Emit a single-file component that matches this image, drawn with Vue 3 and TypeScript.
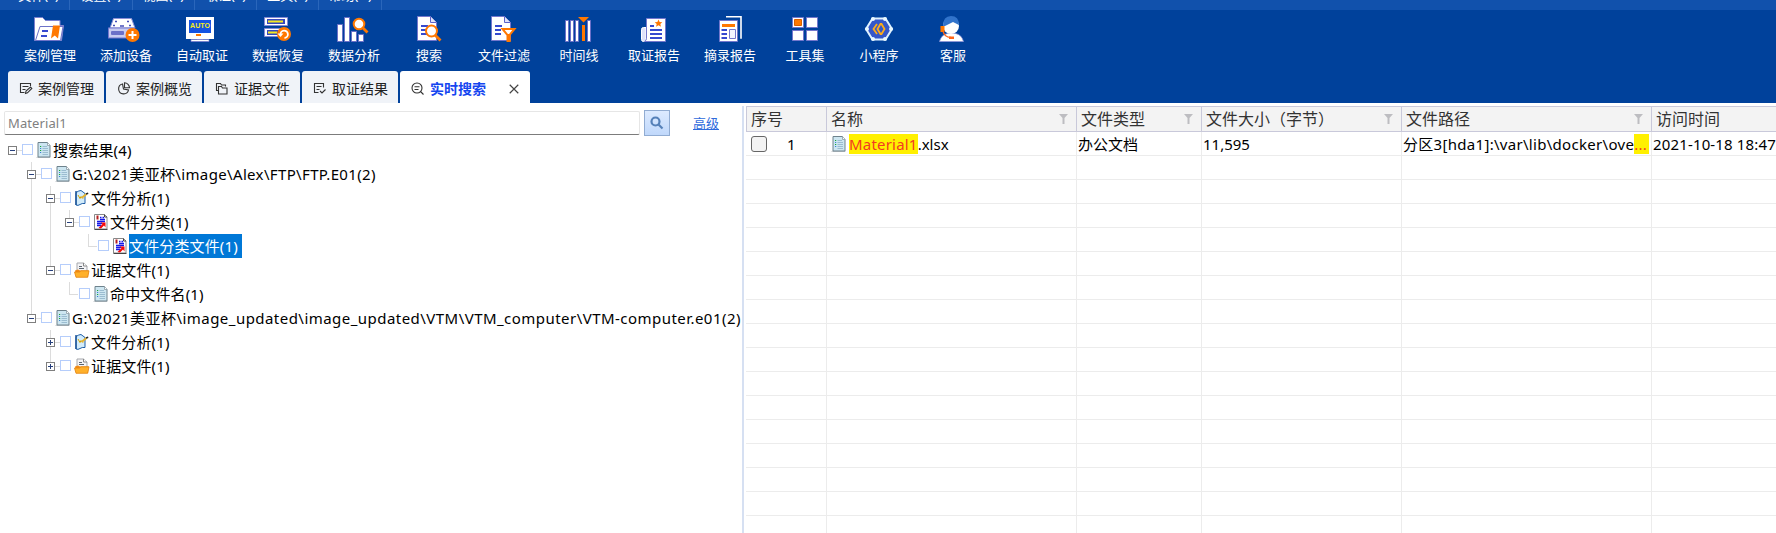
<script setup lang="ts">
interface Tool { label: string; art: string }
interface Tab { label: string; art: string; active?: boolean }
type Guide = '' | 'full' | 'half'
interface Node {
  label: string
  level: number
  toggle?: 'minus' | 'plus'
  icon: 'doc' | 'analysis' | 'category' | 'folder'
  guides: Guide[]
  selected?: boolean
  source?: 'short' | 'long'
}
interface Column { title: string; width: number; filter: boolean }

const menus: string[] = ['文件(F)', '设置(S)', '视图(V)', '取证(E)', '工具(T)', '帮助(H)']

const page = '<path d="M.5.5h13l6 6v18H.5z" fill="#fff" stroke="#7377cd"/><path d="M13.5.5v6h6" fill="#dfe3fa" stroke="#5b62c8"/><path d="M4 10h7M4 14h6M4 18h6" stroke="#3549cf" stroke-width="1.8"/>'

const tools: Tool[] = [
  { label: '案例管理', art: '<path d="M.5 1.500h8l3 3h14.500v5h3.500l-2 15H.5z" fill="#fff" stroke="#7b80cf"/><path d="M6 10.500h23l-2.500 14H1.500z" fill="#fff" stroke="#6d72c8"/><path d="M8 15h6M7 20h6" stroke="#3549cf" stroke-width="1.8"/><path d="M19 9.500h7l-2 13-3.200-3-3.800 3z" fill="#ff7800"/>' },
  { label: '添加设备', art: '<path d="M3.500 2.500h18l3.500 9.500H0z" fill="#fff" stroke="#8a8fd6"/><rect x="-1.500" y="12" width="26" height="10" fill="#c9ccf0" stroke="#7377cd"/><rect x="1" y="15" width="13" height="4" rx="1" fill="#6b70c8"/><path d="M5 5.500h2M17 5.500h2M3 9.500h2M19 9.500h2M10 10h4" stroke="#444db8" stroke-width="1.600"/><circle cx="22.500" cy="19" r="7" fill="#ff7800"/><path d="M18.500 19h8M22.500 15v8" stroke="#fff" stroke-width="2"/>' },
  { label: '自动取证', art: '<path d="M0 1h28v22H0z" fill="#fff"/><path d="M3 4h22v13H3z" fill="#1453e2"/><text x="14" y="12" text-anchor="middle" textLength="20" lengthAdjust="spacingAndGlyphs" font-size="6.500" font-weight="bold" font-family="Liberation Sans, sans-serif" fill="#f5ee18">AUTO</text><path d="M10 18h5v2h-5z" fill="#ff7800"/><path d="M11 23h6v1h-6z" fill="#7377cd"/><path d="M5 23.500h18v2H5z" fill="#fff" stroke="#7377cd" stroke-width=".7"/>' },
  { label: '数据恢复', art: '<g fill="#fff" stroke="#8589d4"><path d="M2.500 1.500h23v8h-23zM2.500 12.500h23v8h-23z"/></g><path d="M5 3h18v5H5zM5 14h18v5H5z" fill="#3446bf"/><path d="M6 5.500h15M6 16.500h9" stroke="#f4ea20" stroke-width="2"/><circle cx="22" cy="18" r="7" fill="#ff7800"/><path d="M18.500 18.500a3.700 3.700 0 1 1 4 3.500" fill="none" stroke="#fff" stroke-width="1.800"/><path d="M15.500 17.500h6L18.500 21z" fill="#fff"/>' },
  { label: '数据分析', art: '<g fill="#fff" stroke="#6b70c8"><path d="M-.5 8.500h5v17h-5zM6.500 1.500h5v24h-5zM13.500 15.500h5v10h-5zM20.500 18.500h5v7h-5z"/></g><path d="M24.500 11.500l5 5" stroke="#ff7800" stroke-width="2.800"/><circle cx="21" cy="8" r="5.300" fill="#fff" stroke="#ff7800" stroke-width="2"/>' },
  { label: '搜索', art: `<g transform="translate(4 0)">${page}</g><path d="M22 19l5.500 5.500" stroke="#ff7800" stroke-width="2.800"/><circle cx="18.500" cy="15" r="5.500" fill="#fff" stroke="#ff7800" stroke-width="2"/>` },
  { label: '文件过滤', art: `<g transform="translate(3 0)">${page}</g><path d="M14.500 13h12l-5 6v6l-2 0v-6z" fill="#fff" stroke="#ff7800" stroke-width="2"/><path d="M19.500 18h3v8h-3z" fill="#ff7800"/>` },
  { label: '时间线', art: '<g fill="#fff" stroke="#6b70c8"><path d="M2.500 4.500h3v21h-3zM7.500 4.500h3v21h-3zM12.500 4.500h3v21h-3zM24.500 4.500h3v21h-3z"/></g><path d="M15 1h11l-5.500 5.500z" fill="#ff7800"/><path d="M19 9h3v16h-3z" fill="#ff7800"/>' },
  { label: '取证报告', art: '<path d="M8 11.500H5.500q-2 0-2 2v10q0 2 2 2H8z" fill="#dfe3fa" stroke="#fff"/><path d="M8.500 2.500h19v23h-21q2-1 2-3z" fill="#fff" stroke="#7377cd"/><path d="M20.500 3.500l1.100 2.500 2.700.2-2 1.800.7 2.700-2.500-1.500L18 10.700l.7-2.700-2-1.800 2.700-.2z" fill="#ff7800"/><path d="M12 10h4M12 14h12M12 18h12M12 22h12" stroke="#3549cf" stroke-width="1.800"/>' },
  { label: '摘录报告', art: '<path d="M12 .8h15v22" fill="none" stroke="#fff" stroke-width="1.600"/><path d="M5.500 4.500h18v21h-18z" fill="#fff" stroke="#7377cd"/><path d="M8 8h13v3H8z" fill="#ff7800"/><path d="M7.500 14h5.500M7.500 18h5.500M7.500 22h5.500" stroke="#3549cf" stroke-width="1.800"/><path d="M15.500 13.500h6v9h-6z" fill="#f4f5ff" stroke="#7377cd"/>' },
  { label: '工具集', art: '<g fill="#fff" stroke="#7377cd"><path d="M3.500 1.500h11v10h-11zM17.500 1.500h11v10h-11zM3.500 14.500h11v10h-11zM17.500 14.500h11v10h-11z"/></g><path d="M5.500 3.500h7v6h-7z" fill="#ff7800" stroke="#d95f00"/>' },
  { label: '小程序', art: '<path d="M9.500 2.500h13L29 13l-6.500 10.500h-13L3 13z" fill="#3557c9" stroke="#dff2ff" stroke-width="2"/><g fill="#e8f8ff"><circle cx="10" cy="3" r="2"/><circle cx="22" cy="3" r="2"/><circle cx="28" cy="13" r="2"/><circle cx="22" cy="23" r="2"/><circle cx="10" cy="23" r="2"/><circle cx="4" cy="13" r="2"/></g><path d="M14 8l-3.500 5 3.500 5M17.500 8h1l3 5-3 5h-1l-3-5z" fill="none" stroke="#ffac18" stroke-width="1.800"/>' },
  { label: '客服', art: '<path d="M2.500 25.500q2-7 8-8h8q6 1 8 8z" fill="#fff" stroke="#8f94da" stroke-width=".7"/><circle cx="14" cy="10" r="8" fill="#fff"/><path d="M6 10Q6 0 14 0t8 9l-6-3-8 4z" fill="#3173cb"/><path d="M3.500 10h4v6h-4z" fill="#ff7800"/><path d="M6 15q1 6 8 6.500" fill="none" stroke="#ff6418" stroke-width="1.400"/><path d="M12 20.500h5v2.500h-5z" fill="#ff6418"/>' },
]

const tabs: Tab[] = [
  { label: '案例管理', art: '<path d="M11.500 4V1.500H1.500v9h4M3.500 4.500h6M3.500 7.500h3"/><path d="M6.500 11.500l.5-2.500 4.500-4 1.300 1.500-4.300 4.300z"/>' },
  { label: '案例概览', art: '<path d="M5.500 2A5 5 0 1 0 11.500 8l-5-1z"/><path d="M7.500.8v5h5A5 5 0 0 0 7.500.8z"/>' },
  { label: '证据文件', art: '<path d="M3.500 8.500h-2v-7h4l1 1.500h4v1.500"/><path d="M3.500 4.500h3l1 1.500h4.500v6H3.500z"/>' },
  { label: '取证结果', art: '<path d="M10.500 5.500v-4h-9v9h4M3.500 4.500h5M3.500 7.500h3M7 9l2 2 3.500-3.500"/>' },
  { label: '实时搜索', art: '<circle cx="6" cy="6" r="5"/><path d="M9.500 9.500l3 3M3.500 4.800h5M3.500 7.500h4"/>', active: true },
]

const nodes: Node[] = [
  { label: '搜索结果(4)', level: 0, toggle: 'minus', icon: 'doc', guides: [''] },
  { label: 'G:\\2021美亚杯\\image\\Alex\\FTP\\FTP.E01(2)', level: 1, toggle: 'minus', icon: 'doc', guides: ['', 'full'], source: 'short' },
  { label: '文件分析(1)', level: 2, toggle: 'minus', icon: 'analysis', guides: ['', 'full', 'full'] },
  { label: '文件分类(1)', level: 3, toggle: 'minus', icon: 'category', guides: ['', 'full', 'full', 'half'] },
  { label: '文件分类文件(1)', level: 4, icon: 'category', guides: ['', 'full', 'full', '', 'half'], selected: true },
  { label: '证据文件(1)', level: 2, toggle: 'minus', icon: 'folder', guides: ['', 'full', 'half'] },
  { label: '命中文件名(1)', level: 3, icon: 'doc', guides: ['', 'full', '', 'half'] },
  { label: 'G:\\2021美亚杯\\image_updated\\image_updated\\VTM\\VTM_computer\\VTM-computer.e01(2)', level: 1, toggle: 'minus', icon: 'doc', guides: ['', 'half'], source: 'long' },
  { label: '文件分析(1)', level: 2, toggle: 'plus', icon: 'analysis', guides: ['', '', 'full'] },
  { label: '证据文件(1)', level: 2, toggle: 'plus', icon: 'folder', guides: ['', '', 'half'] },
]

const docArt = '<path d="M.5 15.500h14" stroke="#c9cdd0"/><path d="M2 .5h9.500l2.500 3v11.500H2z" fill="#cde6f1" stroke="#6e828c"/><path d="M11.500.5v3H14" fill="#fff" stroke="#8b9ba3" stroke-width=".8"/><path d="M6.500 4.500h4.500M6.500 6.500h5.500M6.500 8.500h5.500M6.500 10.500h5.500M6.500 12.500h5.500" stroke="#9bbcd0"/><path d="M4 4.500h1.200M4 8.500h1.200" stroke="#16a934" stroke-width="1.200"/><path d="M4 6.500h1.200M4 10.500h1.200" stroke="#3984d0"/>'
const icons: Record<Node['icon'], string> = {
  doc: docArt,
  analysis: '<path d="M2 2.500q3-2 5-2l4 3v10q-3-.5-5 1t-4 .5z" fill="#d3ecfb" stroke="#1f5fa8"/><path d="M2 1v14" stroke="#174f94" stroke-width="1.400"/><path d="M4 5l2 3.500 1-2 2 2" fill="none" stroke="#d8a500"/><path d="M7.500 8l5-4" stroke="#e4b22d" stroke-width="2"/><path d="M12 4l2.200-.8" stroke="#252525" stroke-width="1.500"/>',
  category: '<path d="M1.500.5h10L14 3v12H1.500z" fill="#fff" stroke="#888"/><path d="M11.500.5V3H14M1.500 15.500h13" fill="none" stroke="#444"/><path d="M3.500 1.500h2v4h-2z" fill="#b42020"/><path d="M7 3.500h1.500M9.500 3.500H11M7 5.500h5M4 7.500h8M4 9.500h5M4 11.500h4" stroke="#1717e8" stroke-width="1.300"/><path d="M5.500 14l4-4-2-1.500h5v5l-1.500-2-3 3z" fill="#f30808"/>',
  folder: '<path d="M3 9V1h6.500l3.500 3v5" fill="#f4f4f6" stroke="#a6a8ad"/><path d="M9.500 1v3H13" fill="#fff" stroke="#888"/><path d="M5 4.500h3M5 6.500h5" stroke="#5b6470"/><path d="M1 8.500l3-1 2 1h8.500l-.5 6.500H2z" fill="#f08a17"/><path d="M.5 10h5l1.500-1.200h8l-1.300 6.500H2z" fill="#ffb02a" stroke="#e58310" stroke-width=".8"/>',
}

const columns: Column[] = [
  { title: '序号', width: 81, filter: false },
  { title: '名称', width: 250, filter: true },
  { title: '文件类型', width: 125, filter: true },
  { title: '文件大小（字节）', width: 200, filter: true },
  { title: '文件路径', width: 250, filter: true },
  { title: '访问时间', width: 200, filter: false },
]
const blankRows = 16
</script>

<template>
  <div class="window">
    <nav class="menubar">
      <span v-for="m in menus" :key="m" class="menu">{{ m }}</span>
    </nav>
    <header class="toolbar">
      <div class="tools">
        <div v-for="t in tools" :key="t.label" class="tool" :class="{ wide: t.label.length === 4 }">
          <svg class="tool-icon" viewBox="0 0 32 28" fill="none" v-html="t.art"></svg>
          <span>{{ t.label }}</span>
        </div>
      </div>
      <div class="tabs">
        <div v-for="t in tabs" :key="t.label" class="tab" :class="{ active: t.active }">
          <svg class="tab-icon" viewBox="0 0 14 14" v-html="t.art"></svg>
          <span class="tab-label">{{ t.label }}</span>
          <svg v-if="t.active" class="close" viewBox="0 0 11 11"><path d="M.8.8l9.400 9.400M10.200.8L.8 10.200" /></svg>
        </div>
      </div>
    </header>
    <main class="body">
      <section class="left">
        <div class="searchbar">
          <div class="field">Material1</div>
          <div class="go">
            <svg viewBox="0 0 14 14"><circle cx="5.500" cy="5.500" r="4" /><path d="M8.500 8.500l4 4" /></svg>
          </div>
          <a class="advanced">高级</a>
        </div>
        <div class="tree">
          <div v-for="(n, i) in nodes" :key="i" class="node">
            <span v-for="(g, l) in n.guides" :key="l" class="guide" :class="[g, { own: l === n.level, leaf: !n.toggle }]">
              <svg v-if="l === n.level && n.toggle" class="toggle" viewBox="0 0 9 9">
                <rect x=".5" y=".5" width="8" height="8" />
                <path :d="n.toggle === 'plus' ? 'M2 4.500h5M4.500 2v5' : 'M2 4.500h5'" />
              </svg>
            </span>
            <span class="check"></span>
            <svg class="node-icon" viewBox="0 0 16 16" fill="none" v-html="icons[n.icon]"></svg>
            <span class="node-label" :class="[n.source, { selected: n.selected }]">{{ n.label }}</span>
          </div>
        </div>
      </section>
      <section class="grid">
        <div class="row head">
          <div v-for="c in columns" :key="c.title" class="cell" :style="{ width: c.width + 'px' }">
            <span>{{ c.title }}</span>
            <svg v-if="c.filter" class="filter" viewBox="0 0 9 10"><path d="M0 0h9L5.500 4v6h-2V4z" /></svg>
          </div>
        </div>
        <div class="row">
          <div class="cell index" :style="{ width: columns[0].width + 'px' }"><span class="box"></span><span class="num">1</span></div>
          <div class="cell name" :style="{ width: columns[1].width + 'px' }">
            <svg class="file" viewBox="0 0 16 16" fill="none" v-html="docArt"></svg>
            <mark>Material1</mark><span>.xlsx</span>
          </div>
          <div class="cell" :style="{ width: columns[2].width + 'px' }">办公文档</div>
          <div class="cell" :style="{ width: columns[3].width + 'px' }">11,595</div>
          <div class="cell path" :style="{ width: columns[4].width + 'px' }"><span>分区3[hda1]:\var\lib\docker\ove</span><mark class="dots">...</mark></div>
          <div class="cell date" :style="{ width: columns[5].width + 'px' }">2021-10-18 18:47:23</div>
        </div>
        <div v-for="r in blankRows" :key="r" class="row">
          <div v-for="c in columns" :key="c.title" class="cell" :style="{ width: c.width + 'px' }"></div>
        </div>
      </section>
    </main>
  </div>
</template>

<style>
body { margin: 0; overflow: hidden; }
</style>

<style scoped>
.window, .window * { box-sizing: border-box; }
.window {
  width: 1776px; height: 533px; overflow: hidden; background: #fff; color: #000;
  display: flex; flex-direction: column;
  font-family: "Noto Sans", "Noto Sans CJK SC", sans-serif; font-size: 15px;
}
svg { display: block; flex: none; overflow: visible; }
.menubar { height: 10px; flex: none; display: flex; align-items: flex-end; padding-left: 8px; background: #1151ac; overflow: hidden; }
.menu { width: 62.300px; height: 22px; flex: none; line-height: 15px; font-size: 13px; color: #fff; text-align: center; border-right: 1px solid #2a66bb; white-space: nowrap; }
.toolbar { height: 93px; flex: none; background: #00419b; display: flex; flex-direction: column; justify-content: space-between; }
.tools { display: flex; padding: 6px 0 0 12px; }
.tool { width: 74px; display: flex; flex-direction: column; align-items: center; color: #fff; font-size: 13px; line-height: 18px; white-space: nowrap; }
.tool.wide { width: 76px; }
.tool-icon { width: 32px; height: 28px; margin-bottom: 2px; }
.tabs { display: flex; gap: 2px; padding-left: 8px; }
.tab { width: 96px; height: 32px; padding: 4px 0 0 11px; display: flex; align-items: center; background: #f0f3f8; border-radius: 3px 3px 0 0; font-size: 14px; color: #222; white-space: nowrap; }
.tab.active { width: 130px; background: #fff; color: #1546f0; font-weight: bold; }
.tab-icon { width: 14px; height: 14px; margin-right: 5px; fill: none; stroke: #333; stroke-width: 1.1; }
.tab-label { width: 56px; line-height: 20px; }
.close { width: 10px; height: 10px; margin-left: 23px; fill: none; stroke: #444; stroke-width: 1.3; }
.body { height: 430px; display: flex; padding-top: 3px; }
.left { width: 744px; flex: none; border-right: 2px solid #d6e0f2; }
.searchbar { display: flex; align-items: center; height: 32px; padding: 4px 0 2px 4px; }
.field { width: 636px; height: 24px; border: 1px solid #e6e6e6; border-bottom-color: #7c7c7c; border-radius: 2px; padding-left: 3px; line-height: 22px; font-size: 13px; letter-spacing: .1px; color: #808080; }
.go { width: 26px; height: 26px; margin-left: 4px; border: 1px solid #91acd2; background: linear-gradient(#dceaff, #c0d8fb); display: grid; place-items: center; }
.go svg { width: 14px; height: 14px; fill: none; stroke: #5580b8; stroke-width: 2.2; }
.advanced { margin-left: 23px; font-size: 13px; line-height: 18px; color: #2f6bdc; text-decoration: underline; }
.node { height: 24px; display: flex; align-items: center; padding-left: 3px; }
.guide { width: 19px; height: 24px; flex: none; position: relative; display: flex; align-items: center; justify-content: center; }
.guide.full::before, .guide.half::before { content: ""; position: absolute; left: 9px; top: 0; width: 1px; height: 24px; background: #dcdcdc; }
.guide.half::before { height: 12px; }
.guide.own::after { content: ""; position: absolute; left: 14px; top: 12px; width: 5px; height: 1px; background: #dcdcdc; }
.guide.own.leaf::after { left: 9px; width: 9px; }
.toggle { width: 9px; height: 9px; position: relative; fill: #fff; stroke: #7f7f7f; }
.toggle path { stroke: #27407c; }
.check { width: 11px; height: 11px; flex: none; border: 1px solid #b5cdfb; background: #fff; margin-bottom: 1px; }
.node-icon { width: 16px; height: 16px; margin-left: 3px; }
.node-label { height: 24px; line-height: 25px; margin-left: 1px; white-space: nowrap; padding-right: 4px; letter-spacing: .14px; }
.node-label.short { letter-spacing: .35px; }
.node-label.long { letter-spacing: .46px; }
.node-label.selected { background: #0078d7; color: #fff; }
.grid { flex: 1; margin-left: 2px; min-width: 0; overflow: hidden; }
.row { display: flex; height: 24px; }
.cell { flex: none; height: 24px; padding-left: 1px; border-right: 1px solid #ececec; border-bottom: 1px solid #ececec; display: flex; align-items: center; line-height: 20px; white-space: nowrap; }
.head { height: 26px; }
.head .cell { height: 26px; background: #f3f3f3; border-color: #c9c9da; border-top: 1px solid #c9c9da; padding-left: 4px; font-size: 16px; color: #333; justify-content: space-between; }
.head .cell:first-child { border-left: 1px solid #c9c9da; padding-left: 4px; }
.filter { width: 9px; height: 10px; margin-right: 8px; fill: #bdbdc1; }
.index .box { width: 16px; height: 16px; margin-left: 4px; border: 1px solid #666; border-radius: 3px; background: #f3f3f3; }
.index .num { margin-left: 20px; }
.cell.name { padding-left: 4px; }
.file { width: 16px; height: 16px; margin-right: 2px; }
mark { background: #fff000; color: #f33a22; height: 20px; line-height: 20px; letter-spacing: .2px; }
.path { letter-spacing: .3px; }
.path .dots { width: 15px; }
.date { letter-spacing: .15px; }
</style>
